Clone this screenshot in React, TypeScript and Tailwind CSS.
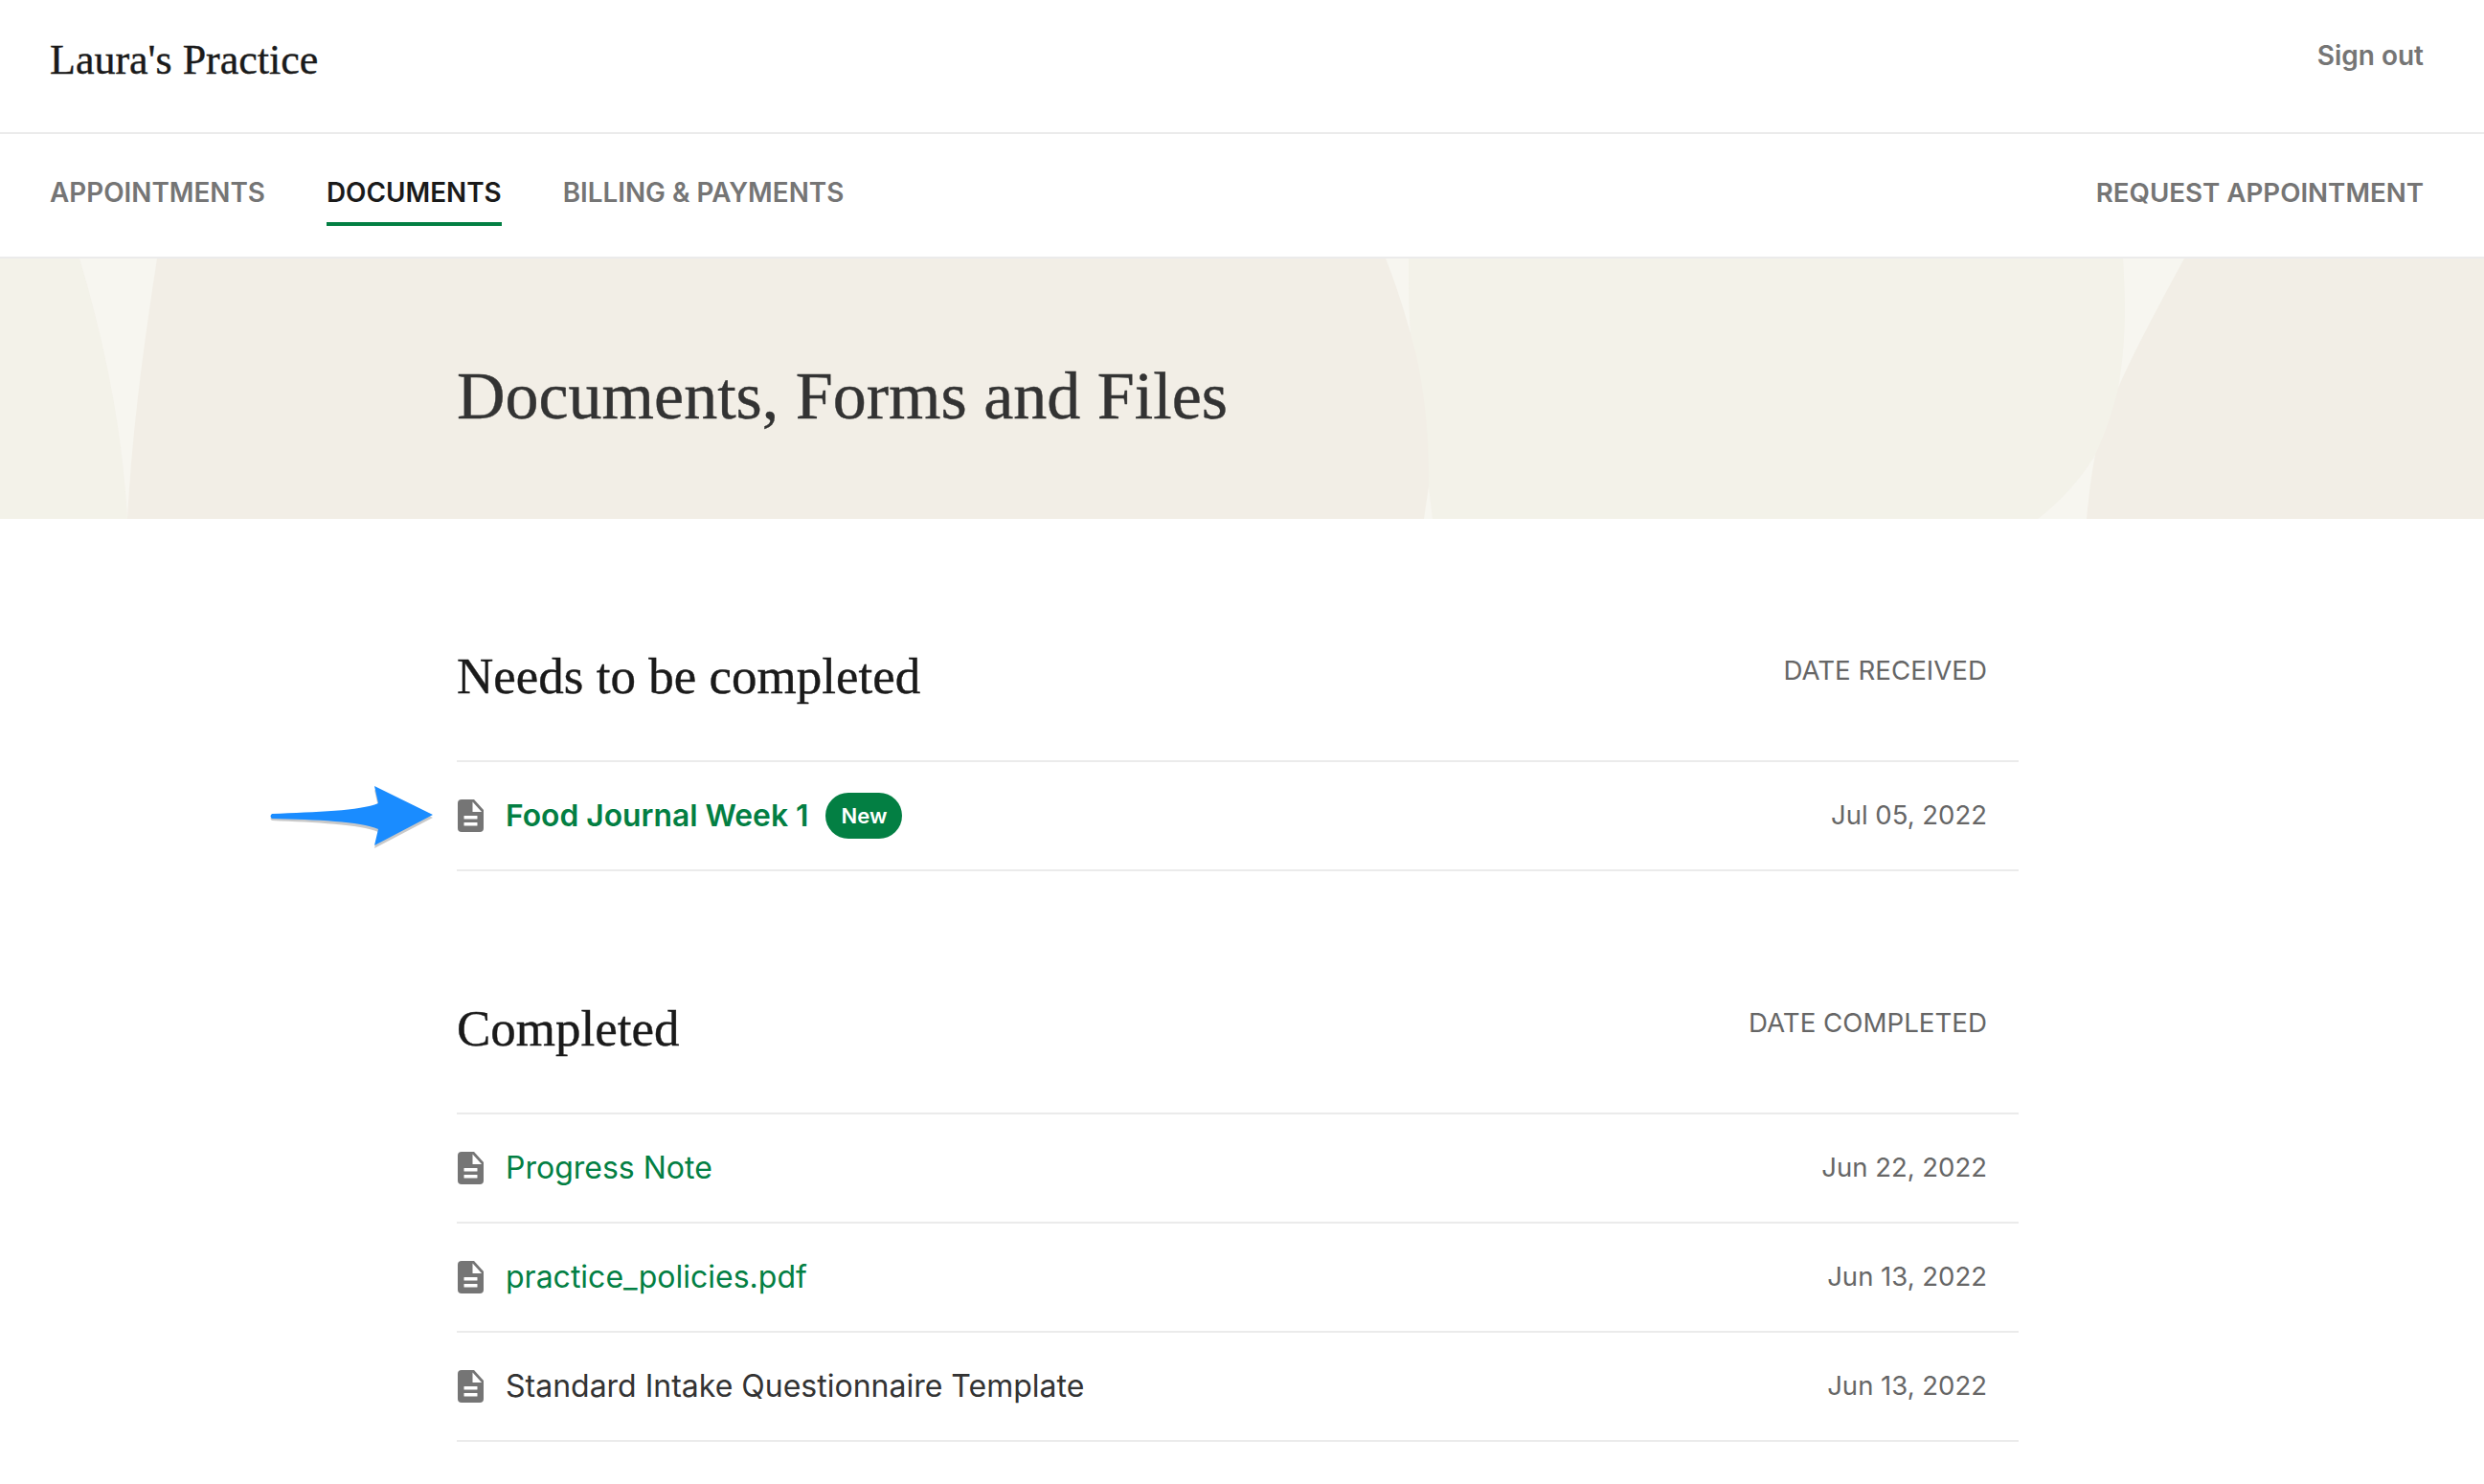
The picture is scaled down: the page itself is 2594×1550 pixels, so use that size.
import React from 'react';

const serif = "font-['Liberation_Serif',serif] [-webkit-text-stroke:0.4px]";

const FileIcon: React.FC = () => (
  <svg width="27" height="34" viewBox="0 0 27 34" className="ml-px shrink-0">
    <path
      d="M4 0 H17 L27 11 V30 a4 4 0 0 1 -4 4 H4 a4 4 0 0 1 -4 -4 V4 a4 4 0 0 1 4 -4 Z"
      fill="#757575"
    />
    <path d="M15.5 2.5 L25 13 H15.5 Z" fill="#fff" />
    <rect x="6.5" y="17" width="14" height="3.5" rx="0.5" fill="#fff" />
    <rect x="6.5" y="24" width="14" height="3.5" rx="0.5" fill="#fff" />
  </svg>
);

const Arrow: React.FC = () => (
  <svg width="172" height="68" viewBox="0 0 172 68" className="absolute left-[-197px] top-[25px]">
    <path
      d="M4 30 C50 28 96 27 115 20 L111 2 L172 31 L111 63 L115 46 C96 38 50 36 4 34 Q1 32 4 30 Z"
      fill="#888"
      opacity="0.45"
      transform="translate(0 2)"
    />
    <path
      d="M4 29 C50 27 96 26 115 18 L111 0 L172 30 L111 62 L115 45 C96 37 50 35 4 34 Q1 31.5 4 29 Z"
      fill="#1a8cff"
    />
  </svg>
);

const Row: React.FC<{
  name: string;
  date: string;
  link?: boolean;
  strong?: boolean;
  badge?: boolean;
  arrow?: boolean;
}> = ({ name, date, link, strong, badge, arrow }) => (
  <div className="relative flex h-[114px] items-center justify-between border-b-2 border-[#ebebeb] pr-[33px]">
    {arrow && <Arrow />}
    <div className="flex items-center">
      <FileIcon />
      <span
        className={`ml-[23px] ${link ? 'text-[#037f43]' : 'text-[#333]'} ${strong ? 'text-[31.8px] font-semibold' : 'text-[32px] font-normal'}`}
      >
        {name}
      </span>
      {badge && (
        <span className="ml-[18px] flex h-[48px] w-[80px] items-center justify-center rounded-full bg-[#037f43] text-[22px] font-semibold text-white">
          New
        </span>
      )}
    </div>
    <span className="text-[27.5px] text-[#666]">{date}</span>
  </div>
);

const Section: React.FC<{ title: string; label: string; children: React.ReactNode }> = ({ title, label, children }) => (
  <section>
    <div className="flex h-[146px] items-start justify-between border-b-2 border-[#ebebeb] pr-[33px]">
      <h2 className={`${serif} mt-[22px] text-[53px] leading-[68px] text-[#1a1a1a]`}>{title}</h2>
      <span className="mt-[28px] text-[27.7px] leading-[44px] text-[#666]">{label}</span>
    </div>
    {children}
  </section>
);

export default function App() {
  return (
    <div className="h-[1550px] overflow-hidden bg-white font-['Inter',sans-serif]">
      <header className="flex h-[140px] items-start justify-between border-b-2 border-[#ebebeb] pl-[52px] pr-[63px]">
        <div className={`${serif} mt-[37px] text-[44px] leading-[52px] text-[#1a1a1a]`}>Laura's Practice</div>
        <a className="mt-[38px] text-[28px] leading-[40px] font-semibold text-[#757575]">Sign out</a>
      </header>

      <nav className="flex h-[130px] items-start justify-between border-b-2 border-[#ebebeb] pl-[52px] pr-[63px]">
        <div className="flex gap-[64px] text-[27.85px] font-semibold text-[#757575]">
          <a className="flex h-[96px] items-center border-b-4 border-transparent pt-[32px]">APPOINTMENTS</a>
          <a className="flex h-[96px] items-center border-b-4 border-[#037f43] pt-[32px] text-[#1a1a1a]">DOCUMENTS</a>
          <a className="flex h-[96px] items-center border-b-4 border-transparent pt-[32px]">BILLING &amp; PAYMENTS</a>
        </div>
        <a className="flex h-[96px] items-center border-b-4 border-transparent pt-[32px] text-[27.7px] font-semibold text-[#757575]">
          REQUEST APPOINTMENT
        </a>
      </nav>

      <div className="relative h-[272px] overflow-hidden bg-[#f2eee6]">
        <svg width="2594" height="272" viewBox="0 0 2594 272" className="absolute left-0 top-0">
          <path d="M0 0 H83 C110 90 128 180 133 272 H0 Z" fill="#f3f2e9" />
          <path d="M83 0 H164 C150 90 138 180 133 272 C128 180 110 90 83 0 Z" fill="#f7f6f0" />
          <path
            d="M1471 0 H2217 C2220 50 2220 90 2212 135 C2205 165 2197 185 2188 205 C2172 232 2150 255 2128 272 H1496 L1492 238 C1493 190 1488 130 1473 78 C1471 50 1471 25 1471 0 Z"
            fill="#f3f2e9"
          />
          <path d="M1447 0 H1471 C1471 25 1471 50 1473 78 C1465 50 1457 25 1447 0 Z" fill="#f7f6f0" />
          <path d="M1492 238 L1496 272 H1487 Z" fill="#f7f6f0" />
          <path d="M2217 0 H2281 C2262 35 2232 90 2212 135 C2220 90 2220 50 2217 0 Z" fill="#f7f6f0" />
          <path d="M2188 205 C2184 225 2181 250 2179 272 H2128 C2150 255 2172 232 2188 205 Z" fill="#f7f6f0" />
        </svg>
        <h1 className={`${serif} relative pl-[477px] pt-[104px] text-[70px] leading-[80px] text-[#333]`}>
          Documents, Forms and Files
        </h1>
      </div>

      <main className="ml-[477px] w-[1631px]">
        <div className="pt-[108px]">
          <Section title="Needs to be completed" label="DATE RECEIVED">
            <Row name="Food Journal Week 1" date="Jul 05, 2022" link strong badge arrow />
          </Section>
        </div>
        <div className="pt-[108px]">
          <Section title="Completed" label="DATE COMPLETED">
            <Row name="Progress Note" date="Jun 22, 2022" link />
            <Row name="practice_policies.pdf" date="Jun 13, 2022" link />
            <Row name="Standard Intake Questionnaire Template" date="Jun 13, 2022" />
          </Section>
        </div>
      </main>
    </div>
  );
}
